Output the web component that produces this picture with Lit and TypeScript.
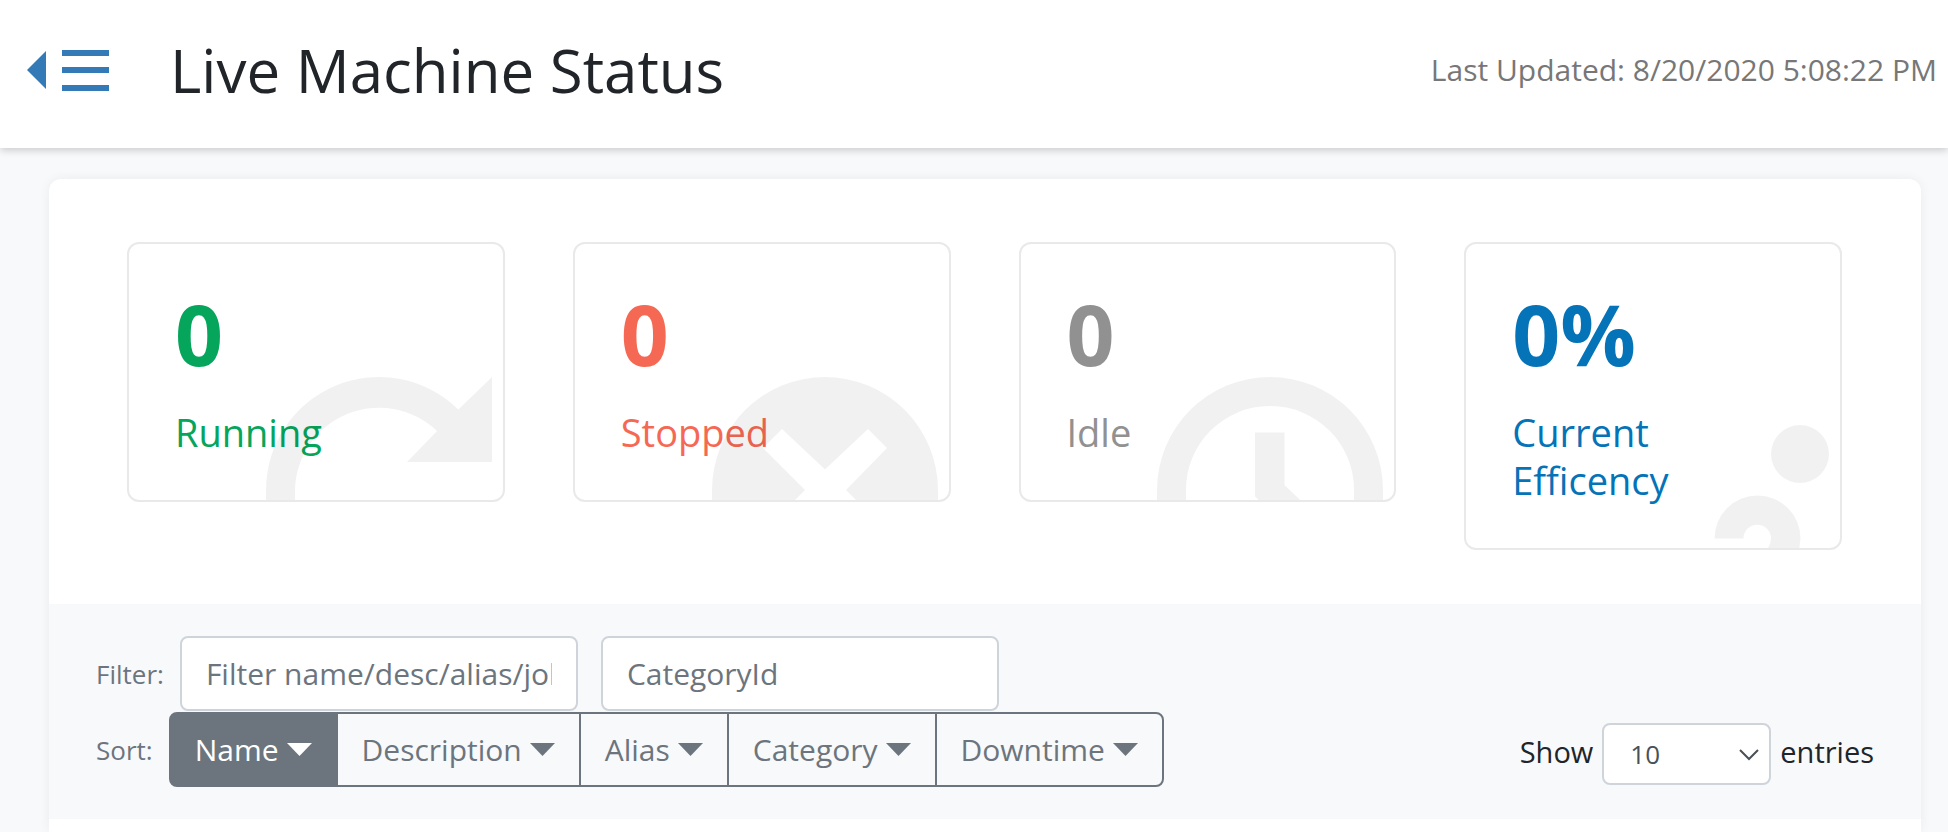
import { LitElement, html, css, svg } from "lit";
import { customElement, property, state } from "lit/decorators.js";
import { classMap } from "lit/directives/class-map.js";

type Tone = "running" | "stopped" | "idle" | "efficiency";

const glyphs = {
  running: svg`<path d="M0 130V113A113 113 0 0 1 192.300 32.500L226 0V85H141L171 54A84 84 0 0 0 29 113V130Z" />`,
  stopped: svg`<path fill-rule="evenodd" d="M0 130V113A113 113 0 0 1 226 113V130H151L134 113L175 71L156 52L113 92.500L70 52L51 71L93 113L76 130Z" />`,
  idle: svg`<path d="M0 130V113A113 113 0 0 1 226 113V130H197V113A84 84 0 0 0 29 113V130Z" /><path d="M98 55.500H127.500V108L150.500 130H109L98 119.500Z" />`,
  efficiency: svg`<circle cx="197" cy="29" r="29" /><path d="M111.500 113.500A43 43 0 0 1 197.500 113.500L195.500 130H160Q168 121 168 113.500A13.500 13.500 0 0 0 140.500 113.500Z" />`,
};

@customElement("stat-card")
export class StatCard extends LitElement {
  @property() value = "";
  @property() label = "";
  @property() tone: Tone = "running";

  static styles = css`
    :host {
      display: block;
    }
    .card {
      position: relative;
      overflow: hidden;
      padding: 46px 46px 44px;
      border: 2px solid #e9e9e9;
      border-radius: 12px;
      background: #fff;
    }
    .value {
      font-size: 84px;
      line-height: 88px;
      font-weight: 700;
      margin: 0 0 30px;
    }
    .label {
      font-size: 38px;
      line-height: 48px;
      margin: 0;
    }
    .running {
      color: #05a65b;
    }
    .stopped {
      color: #f56954;
    }
    .idle {
      color: #919191;
    }
    .efficiency {
      color: #0473b7;
    }
    .glyph {
      position: absolute;
      right: 11px;
      bottom: 0;
      width: 226px;
      height: 123px;
      fill: rgba(0, 0, 0, 0.055);
    }
  `;

  render() {
    return html`
      <section class="card ${this.tone}">
        <p class="value">${this.value}</p>
        <p class="label">${this.label}</p>
        <svg class="glyph" viewBox="0 0 226 123" aria-hidden="true">${glyphs[this.tone]}</svg>
      </section>
    `;
  }
}

@customElement("app-root")
export class AppRoot extends LitElement {
  @state() private sort = "Name";

  private stats: { value: string; label: string; tone: Tone }[] = [
    { value: "0", label: "Running", tone: "running" },
    { value: "0", label: "Stopped", tone: "stopped" },
    { value: "0", label: "Idle", tone: "idle" },
    { value: "0%", label: "Current Efficency", tone: "efficiency" },
  ];

  private sorts = ["Name", "Description", "Alias", "Category", "Downtime"];

  static styles = css`
    :host {
      display: flex;
      flex-direction: column;
      min-height: 100vh;
      box-sizing: border-box;
      background: #f8f9fb;
      color: #212529;
      font-family: "Open Sans", "Noto Sans", sans-serif;
      font-size: 30px;
      line-height: 48px;
    }
    * {
      box-sizing: border-box;
    }
    .top {
      display: flex;
      align-items: center;
      padding: 30px 11px 38px 27px;
      background: #fff;
      box-shadow: 0 2px 8px rgba(0, 0, 0, 0.2);
    }
    .toggle {
      display: block;
      padding: 0;
      border: 0;
      background: none;
      color: #337ab7;
      cursor: pointer;
    }
    .toggle svg {
      display: block;
      width: 83px;
      height: 48px;
      fill: currentColor;
    }
    h1 {
      margin: 0 auto 0 60px;
      font-size: 60px;
      line-height: 80px;
      font-weight: 400;
    }
    .updated {
      margin: 0;
      color: #777;
    }
    .panel {
      flex: 1;
      margin: 31px 27px 0 49px;
      border-radius: 12px 12px 0 0;
      background: #fff;
      box-shadow: 0 0 12px rgba(0, 0, 0, 0.06);
    }
    .stats {
      display: grid;
      grid-template-columns: repeat(4, minmax(0, 1fr));
      align-items: start;
      gap: 68px;
      padding: 63px 79px 54px 78px;
    }
    .tools {
      display: flex;
      flex-direction: column;
      gap: 1px;
      padding: 32px 47px;
      background: #f8f9fb;
    }
    .row {
      display: flex;
      align-items: center;
    }
    .caption {
      color: #6c757d;
      font-size: 26px;
      margin-right: 16px;
    }
    .field {
      width: 398px;
      height: 75px;
      margin: 0 23px 0 0;
      padding: 0 24px;
      border: 2px solid #ced4da;
      border-radius: 8px;
      background: #fff;
      color: #495057;
      font: inherit;
    }
    .field::placeholder {
      color: #6c757d;
      opacity: 1;
    }
    .group {
      display: flex;
    }
    .sort {
      display: flex;
      align-items: center;
      gap: 8px;
      height: 75px;
      padding: 0 24px;
      border: 2px solid #6c757d;
      background: transparent;
      color: #6c757d;
      font: inherit;
      cursor: pointer;
    }
    .sort + .sort {
      margin-left: -2px;
    }
    .sort:first-child {
      border-radius: 8px 0 0 8px;
    }
    .sort:last-child {
      border-radius: 0 8px 8px 0;
    }
    .sort.active {
      background: #6c757d;
      color: #fff;
    }
    .sort svg {
      width: 25px;
      height: 13px;
      fill: currentColor;
    }
    .length {
      display: flex;
      align-items: flex-start;
      gap: 9px;
      margin-left: auto;
      padding-top: 8px;
      font-size: 29px;
      line-height: 58px;
    }
    .picker {
      position: relative;
      display: block;
    }
    .picker select {
      display: block;
      width: 169px;
      height: 62px;
      padding: 0 26px;
      border: 2px solid #ced4da;
      border-radius: 8px;
      appearance: none;
      background: #fff;
      color: #495057;
      font: inherit;
      font-size: 26px;
    }
    .picker svg {
      position: absolute;
      right: 12px;
      top: 25px;
      width: 20px;
      height: 13px;
      fill: none;
      stroke: #495057;
      stroke-width: 2;
      pointer-events: none;
    }
  `;

  render() {
    return html`
      <header class="top">
        <button class="toggle" type="button" aria-label="Toggle menu">
          <svg viewBox="0 0 83 48" aria-hidden="true">
            <path d="M0 24L19 5V43Z" />
            <path d="M35 4H82V10H35ZM35 21H82V27H35ZM35 39H82V45H35Z" />
          </svg>
        </button>
        <h1>Live Machine Status</h1>
        <p class="updated">Last Updated: 8/20/2020 5:08:22 PM</p>
      </header>
      <main class="panel">
        <div class="stats">
          ${this.stats.map(
            (s) => html`<stat-card .value=${s.value} .label=${s.label} .tone=${s.tone}></stat-card>`
          )}
        </div>
        <div class="tools">
          <div class="row">
            <label class="caption" for="filter">Filter:</label>
            <input class="field" id="filter" type="text" placeholder="Filter name/desc/alias/job" />
            <input class="field" type="text" aria-label="CategoryId" placeholder="CategoryId" />
          </div>
          <div class="row">
            <span class="caption" id="sort-caption">Sort:</span>
            <div class="group" role="group" aria-labelledby="sort-caption">
              ${this.sorts.map(
                (name) => html`
                  <button
                    type="button"
                    class=${classMap({ sort: true, active: name === this.sort })}
                    @click=${() => (this.sort = name)}
                  >
                    ${name}
                    <svg viewBox="0 0 25 13" aria-hidden="true"><path d="M0 0H25L12.500 13Z" /></svg>
                  </button>
                `
              )}
            </div>
            <div class="length">
              <label for="length">Show</label>
              <span class="picker">
                <select id="length">
                  <option>10</option>
                  <option>25</option>
                  <option>50</option>
                  <option>100</option>
                </select>
                <svg viewBox="0 0 20 13" aria-hidden="true"><path d="M1 2L10 11L19 2" /></svg>
              </span>
              <span>entries</span>
            </div>
          </div>
        </div>
      </main>
    `;
  }
}
